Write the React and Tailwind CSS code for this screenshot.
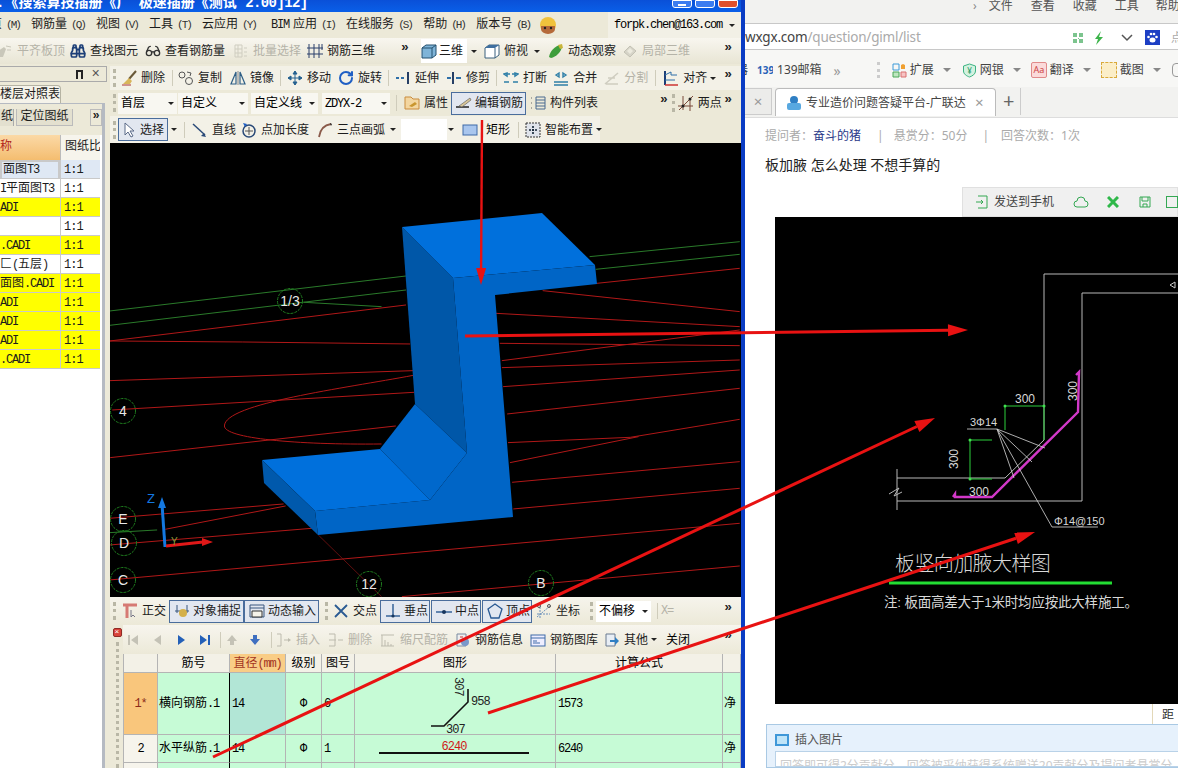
import { Binoculars, Glasses, RotateCw } from "lucide-react";

// latin runs in the CAD window are squeezed to simsun's half-width
const Mix = ({ t }) =>
  t.split(/([\x00-\xff]+)/).map((s, i) =>
    /^[\x00-\xff]+$/.test(s) ? (
      <span key={i} className="tracking-[-1.2px]">{s}</span>
    ) : (
      <span key={i}>{s}</span>
    )
  );

const Ic = ({ children, cn = "" }) => (
  <svg viewBox="0 0 16 16" fill="none" className={`w-4 h-4 shrink-0 ${cn}`}>{children}</svg>
);

const I = {
  level: <Ic><path d="M1 14V8l6-4 2 2-3 8z" fill="#c9c7ba" /><path d="M9 3l5 1M10 7h4" stroke="#c9c7ba" /></Ic>,
  binoc: <Binoculars className="w-4 h-4 shrink-0 text-[#1d3f78]" strokeWidth={2.6} />,
  glasses: <Glasses className="w-4 h-4 shrink-0 text-[#333]" strokeWidth={2} />,
  batch: <Ic><path d="M2 2h7v12H2zM2 6h7M2 10h7M5 2v12M11 5h3M11 9h3M11 13h3" stroke="#cfcdc0" /></Ic>,
  rebar3d: <Ic><path d="M2 1v14M7 1v14M12 1v14M0 5h16M0 11h16M15 1v6" stroke="#2b3f6b" /></Ic>,
  box: <Ic><path d="M1 5l4-3h10v10l-4 3H1z" fill="#7fb4d8" stroke="#24506f" /><path d="M1 5h10v10M11 5l4-3" stroke="#24506f" /></Ic>,
  top: <Ic><path d="M1 5l4-3h10v10l-4 3H1z" fill="#fff" stroke="#3a617f" /><path d="M1 5l4-3h10l-4 3z" fill="#3f6f9f" /><path d="M11 5v10" stroke="#3a617f" /></Ic>,
  orbit: <Ic><path d="M1 14C2 8 7 3 12 2l2 2c-1 5-6 10-11 11z" fill="#3f9e3c" /><path d="M10 2l4-1 1 4-3 1z" fill="#c9b53a" /></Ic>,
  local: <Ic><path d="M2 9l6-6 6 5-6 6z" fill="#d6d4c8" stroke="#c3c1b4" /><path d="M5 8l3-3 3 3-3 3z" fill="#eceade" /></Ic>,
  broom: <Ic><path d="M15 1L8 9" stroke="#6a5a3a" strokeWidth="2" /><path d="M8 8l-6 6h7l2-3z" fill="#d8b65a" /><path d="M1 15h9" stroke="#a33" /></Ic>,
  copy: <Ic><circle cx="4" cy="5" r="3" stroke="#555" /><circle cx="11" cy="11" r="3.5" stroke="#555" /><path d="M9 2l4 1-1 3" stroke="#555" /></Ic>,
  mirror: <Ic><path d="M6 2L1 14h5zM10 2l5 12h-5z" stroke="#2f5f86" strokeWidth="1.2" /><path d="M8 1v14" stroke="#888" /></Ic>,
  move: <Ic><path d="M8 1v14M1 8h14M8 1L6 4h4zM8 15l-2-3h4zM1 8l3-2v4zM15 8l-3-2v4z" stroke="#25618f" fill="#25618f" /></Ic>,
  rotate: <RotateCw className="w-4 h-4 shrink-0 text-[#1f5fc4]" strokeWidth={3} />,
  extend: <Ic><path d="M1 8h3M6 8h3" stroke="#2f6fa8" strokeWidth="2" /><path d="M13 2v12" stroke="#263f66" strokeWidth="2" /></Ic>,
  trim: <Ic><path d="M1 8h4M10 8h5" stroke="#2f6fa8" strokeWidth="2" /><path d="M7 2v12" stroke="#263f66" strokeWidth="2" /></Ic>,
  brk: <Ic><path d="M1 12h5M10 12h5M1 4l3-1v3zM15 4l-3-1v3zM4 4h3M9 4h3" stroke="#2f7fa8" strokeWidth="1.5" /></Ic>,
  merge: <Ic><path d="M1 12h14M3 5l3-2v4zM13 5l-3-2v4zM1 15h14" stroke="#2f7fa8" strokeWidth="1.4" /></Ic>,
  split: <Ic><path d="M1 14L14 3M2 14h12M4 8h7" stroke="#cfcdc0" strokeWidth="1.6" /></Ic>,
  align: <Ic><path d="M2 1v14" stroke="#1d3f78" strokeWidth="2" /><path d="M2 5l6-3v3h6M2 10h10" stroke="#2f6fa8" /><path d="M2 15h13" stroke="#c33" strokeWidth="1.5" /></Ic>,
  props: <Ic><path d="M1 2h6l2 2h6v10H1z" fill="#f3d6a0" stroke="#c98b3c" /><path d="M5 11l6-4 2 2-5 3z" fill="#c9962f" /></Ic>,
  edit: <Ic><path d="M0 12h13" stroke="#222" strokeWidth="1.5" /><path d="M3 11L14 3l1 2L6 12z" fill="#d9c79a" stroke="#555" strokeWidth=".6" /></Ic>,
  list: <Ic><path d="M1 3h2M1 8h2M1 13h2" stroke="#666" strokeDasharray="1 1" /><path d="M6 2h9v12H6zM6 5h9M6 8h9M6 11h9" stroke="#4a6a90" /></Ic>,
  two: <Ic><path d="M1 15L15 1M5 1v14M12 3v13M0 11h15" stroke="#7a4a3a" /><circle cx="5" cy="11" r="1.5" fill="#222" /><circle cx="12" cy="4" r="1.5" fill="#222" /></Ic>,
  cursor: <svg viewBox="0 0 12 16" className="w-3 h-4 shrink-0" fill="none"><path d="M2 1v12l3-3 3 5 2-1-3-5h4z" fill="#fff" stroke="#5a6a88" /></svg>,
  line: <Ic><path d="M1 2l12 11" stroke="#2a4a78" strokeWidth="1.5" /><path d="M14 15l-5-1 3-3z" fill="#2a4a78" /></Ic>,
  point: <Ic><circle cx="8" cy="9" r="6" stroke="#2a4a78" strokeWidth="1.5" /><path d="M8 5v8M4 9h8" stroke="#555" /><path d="M2 1l4 1-2 3z" fill="#1f5fc4" /></Ic>,
  arc: <Ic><path d="M2 15C3 8 7 3 14 2" stroke="#8a5a4a" strokeWidth="1.8" /><path d="M13 1l2 1-1 2z" fill="#222" /></Ic>,
  rect: <Ic><rect x="1" y="3" width="14" height="10" fill="#a9c6ee" stroke="#3e6aa8" /></Ic>,
  smart: <Ic><rect x="1" y="1" width="14" height="14" fill="#dfe3ea" stroke="#333" strokeDasharray="2 1" /><path d="M8 4v8M4 8h8" stroke="#123" strokeWidth="1.6" strokeDasharray="2 1" /></Ic>,
  ortho: <Ic><path d="M1 2h14M5 2v13" stroke="#d67a74" strokeWidth="3" /><path d="M9 7v7l2-2 2 2" stroke="#778" /></Ic>,
  snap: <Ic><path d="M1 8h14M3 2v8M13 2v8" stroke="#38577f" /><circle cx="9" cy="10" r="4" fill="#d4b04a" /></Ic>,
  input: <Ic><path d="M1 2h14v12H1zM1 5h14" stroke="#38577f" /><path d="M3 8h10v6H3z" fill="#f5f3ea" stroke="#333" /></Ic>,
  cross: <Ic><path d="M2 2l12 12M14 2L2 14" stroke="#2a5a92" strokeWidth="1.8" /></Ic>,
  perp: <Ic><path d="M1 13h14" stroke="#2a5a92" strokeWidth="1.4" /><path d="M8 1v12" stroke="#2a5a92" strokeWidth="1.4" /><circle cx="8" cy="13" r="1.6" fill="#17365f" /></Ic>,
  mid: <Ic><path d="M0 9h16" stroke="#2a5a92" strokeWidth="1.4" /><circle cx="8" cy="9" r="2" fill="#17365f" /></Ic>,
  vertex: <Ic><path d="M8 1l7 5-3 9H4L1 6z" stroke="#2a5a92" strokeWidth="1.3" /></Ic>,
  coord: <Ic><path d="M1 14L14 3M4 4v11M1 11h13" stroke="#6b90ba" strokeDasharray="2 1" /><circle cx="3" cy="3" r="1.5" stroke="#555" /><circle cx="13" cy="3" r="1.5" stroke="#555" /></Ic>,
  ins: <Ic><path d="M1 2h4v12H1M8 8h4" stroke="#bdbbae" /><path d="M15 8l-3-2v4z" fill="#bdbbae" /></Ic>,
  del: <Ic><path d="M1 2h6v12H1M1 8h7" stroke="#bdbbae" /><path d="M10 8h5" stroke="#bdbbae" /></Ic>,
  scale: <Ic><path d="M1 3h13M2 3v11M5 8v6M8 10v4M11 12v2M1 14h13" stroke="#bdbbae" /></Ic>,
  info: <Ic><path d="M2 2h9v12H2z" fill="#eee" stroke="#7a8aa0" /><circle cx="10" cy="10" r="4" fill="#7a98c9" /><path d="M5 5h3" stroke="#c33" /></Ic>,
  lib: <Ic><rect x="1" y="3" width="14" height="11" fill="#eef" stroke="#3e6aa8" /><path d="M1 6h14M3 9h4M3 11h7" stroke="#3e6aa8" /></Ic>,
  other: <Ic><path d="M2 2h9v12H2z" fill="#e8eef5" stroke="#6a7a90" /><path d="M6 8h5V5l4 4-4 4v-3H6z" fill="#2f7fc4" /></Ic>,
};

const Caret = ({ cn = "" }) => (
  <span className={`w-0 h-0 shrink-0 border-x-[3px] border-t-[3px] border-x-transparent border-t-[#222] ${cn}`} />
);
const Sep = ({ cn = "" }) => <span className={`w-px h-4 shrink-0 bg-[#cfccbb] ${cn}`} />;
const Grip = ({ cn = "" }) => <span className={`w-[3px] h-[18px] shrink-0 border-l-[3px] border-dotted border-[#b9b7a6] ${cn}`} />;
const More = ({ cn = "ml-auto mr-[9px]" }) => <span className={`text-[13px] font-bold leading-none -mt-2 text-[#222] ${cn}`}>»</span>;

const Tool = ({ icon, label, gray, cn = "" }) => (
  <span className={`flex items-center gap-1 shrink-0 whitespace-nowrap ${gray ? "text-[#b5b3a8]" : "text-[#1c1c1c]"} ${cn}`}>
    {icon}
    <span className="pt-[2px]"><Mix t={label} /></span>
  </span>
);
const Pressed = ({ icon, label, cn = "" }) => (
  <span className={`h-[23px] flex items-center gap-[3px] pl-1 shrink-0 whitespace-nowrap border border-[#4a6d9c] bg-[#e2e7f0] text-[#1c1c1c] ${cn}`}>
    {icon}
    <span className="pt-[2px]">{label}</span>
  </span>
);
const Sel = ({ label, cn = "" }) => (
  <span className={`h-[21px] flex items-center justify-between pl-[3px] pr-[3px] shrink-0 bg-[#f8f7f1] ${cn}`}>
    <span className="pt-[2px]"><Mix t={label} /></span>
    <Caret />
  </span>
);

const menus = [
  ["页", "M"], ["钢筋量", "Q"], ["视图", "V"], ["工具", "T"], ["云应用", "Y"],
  ["BIM应用", "I"], ["在线服务", "S"], ["帮助", "H"], ["版本号", "B"],
];

const drawings = [
  ["面图T3", "bg-[#dfe8f4]"], ["I平面图T3", "bg-white"], ["ADI", "bg-[#ffff00]"], ["", "bg-white"],
  [".CADI", "bg-[#ffff00]"], ["匚(五层)", "bg-white"], ["面图.CADI", "bg-[#ffff00]"], ["ADI", "bg-[#ffff00]"],
  ["ADI", "bg-[#ffff00]"], ["ADI", "bg-[#ffff00]"], [".CADI", "bg-[#ffff00]"],
];

const Sidebar = () => (
  <div className="w-[110px] shrink-0 flex flex-col bg-[#ece9d8] text-[#1c1c1c]">
    <div className="h-[16px] w-[107px] flex items-center justify-end gap-[9px] pr-[6px] border border-l-0 border-[#aaa] text-[11px] leading-none">
      <span className="w-[7px] h-[9px] border-x-2 border-t-2 border-[#222]" />
      <span className="text-[14px] text-[#555]">×</span>
    </div>
    <div className="h-[18px] mt-[3px] w-[61px] bg-[#f5f3ea] border-r border-t border-[#b5b3a3] rounded-tr-sm overflow-hidden whitespace-nowrap leading-[18px] text-right pr-[2px]">楼层对照表</div>
    <div className="flex-1 w-[105px] bg-white border-r-[3px] border-t border-[#b5bac2] flex flex-col">
      <div className="h-[31px] shrink-0 bg-[#ece9d8] flex items-start pt-[5px]">
        <span className="w-[14px] h-[17px] bg-[#e3e0cf] border-r border-[#aaa] text-right leading-[17px] overflow-hidden">纸</span>
        <span className="ml-[2px] w-[57px] h-[17px] bg-[#e3e0cf] border border-t-0 border-[#bbb] text-center leading-[17px]">定位图纸</span>
        <span className="ml-[17px] w-[12px] h-[17px] border border-[#bbb] text-center font-bold leading-[13px]">»</span>
      </div>
      <div className="h-[25px] shrink-0 flex">
        <span className="w-[60px] bg-gradient-to-b from-[#fbd9a6] to-[#f4bd6f] text-[#b2261b] leading-[25px] overflow-hidden">称</span>
        <span className="w-[40px] bg-[#f6f4ec] pl-1 leading-[25px] border-l border-[#bbb] whitespace-nowrap overflow-hidden">图纸比</span>
      </div>
      <div className="grid grid-cols-[60px_40px] auto-rows-[19px]">
        {drawings.map(([name, bg], i) => (
          <div key={i} className="contents">
            <span className={`${bg} whitespace-nowrap overflow-hidden border-b border-[#c9c9c9] ${i === 0 ? "border-2 border-[#777] pl-px leading-[16px]" : "leading-[20px]"}`}>
              <Mix t={name} />
            </span>
            <span className={`${bg} border-l border-b border-[#c9c9c9] pl-[3px] leading-[20px] tracking-[-1px]`}>1:1</span>
          </div>
        ))}
      </div>
    </div>
  </div>
);

// coordinates read off a 2.45 x 3 enlargement of the viewport, hence the scale below
const redLines = [
  "M24 603L750 495", "M24 603L350 606L760 612", "M24 722L768 692", "M30 810L770 757", "M25 953L725 858",
  "M768 706C600 745 305 790 305 858C305 895 480 915 690 912",
  "M24 1135L450 1092", "M160 1168L455 1098", "M24 1215L520 1165", "M24 1320L1568 1150", "M740 1370L1568 1278",
  "M1218 430L1568 385", "M1085 452L1568 515", "M970 520L1568 560", "M980 610L1568 617", "M985 662L1568 570",
  "M985 683L1568 660", "M988 740L1568 690", "M998 822L1568 745", "M1000 908L1300 892L1568 838", "M1005 968L1320 890",
  "M1010 1027L1568 965", "M1013 1107L1568 1045",
];
const greenLines = ["M24 513L750 408", "M24 556L750 450", "M500 487L690 500", "M1200 350L1568 305", "M1215 388L1568 343", "M24 1178L140 1170"];
const axes = [["1/3", 290, 301], ["4", 123, 411], ["E", 123, 519], ["D", 124, 543], ["C", 123, 580], ["12", 369, 584], ["B", 541, 583]];

const Viewport = () => (
  <div className="h-[454px] bg-black">
    <svg viewBox="110 143 631 454" className="w-full h-full block">
      <g transform="translate(100 140) scale(.408 .3333)" fill="none">
        {redLines.map((d) => <path key={d} d={d} stroke="#b01818" strokeWidth="1" vectorEffect="non-scaling-stroke" />)}
        <path d="M535 1185L690 1370" stroke="#8a1515" strokeWidth=".7" vectorEffect="non-scaling-stroke" />
        {greenLines.map((d) => <path key={d} d={d} stroke="#2a7a2a" strokeWidth="1" vectorEffect="non-scaling-stroke" />)}
      </g>
      {axes.map(([t, x, y]) => (
        <g key={t}>
          <circle cx={x} cy={y} r="12.5" fill="none" stroke="#1e7a1e" strokeDasharray="3 1" />
          <text x={x} y={y + 5} textAnchor="middle" fill="#e8e8e8" className="text-[14px] font-[family-name:'Liberation_Sans',sans-serif]">{t}</text>
        </g>
      ))}
      <polygon points="402,227 453,278 467,453 415,404" fill="#0057a8" />
      <polygon points="402,227 542,213 595,265 453,278" fill="#0070dc" />
      <polygon points="453,278 595,265 597,284 495,295 513,517 318,535 315,511 430,500 467,453" fill="#0065c6" />
      <polygon points="415,404 467,453 430,500 380,449" fill="#0068cc" />
      <polygon points="262,460 380,449 430,500 315,511" fill="#0070dc" />
      <polygon points="262,460 315,511 318,535 264,483" fill="#0059ac" />
      <path d="M165 547L162 504" stroke="#1478e0" strokeWidth="3" />
      <polygon points="162,497 158,508 166,508" fill="#1478e0" />
      <text x="147" y="503" fill="#1478e0" className="text-[13px] font-[family-name:'Liberation_Sans',sans-serif]">Z</text>
      <path d="M166 546L203 542" stroke="#e01818" strokeWidth="3" />
      <polygon points="213,542 202,538 202,546" fill="#e01818" />
      <text x="171" y="545" fill="#8a9a3a" className="text-[10px] font-[family-name:'Liberation_Sans',sans-serif]">Y</text>
    </svg>
  </div>
);

const cell = "border-r border-b border-[#b4b4b4] flex items-center overflow-hidden whitespace-nowrap";
const head = `${cell} justify-center bg-[#f3f1e7] pt-[2px]`;
const Row = ({ no, name, grade, fig, shape, formula, first }) => (
  <>
    <span className={`${cell} justify-center ${first ? "bg-[#f9c67c] text-[#8a2a1a]" : "bg-[#f6f4ec]"}`}><Mix t={no} /></span>
    <span className={`${cell} pl-px bg-[#c6fbd6]`}><Mix t={name} /></span>
    <span className={`${cell} pl-[2px] border-l border-l-black -ml-px ${first ? "bg-[#b2e6d6]" : "bg-[#c6fbd6]"}`}><Mix t="14" /></span>
    <span className={`${cell} justify-center bg-[#c6fbd6]`}>{grade}</span>
    <span className={`${cell} pl-[2px] bg-[#c6fbd6]`}><Mix t={fig} /></span>
    <span className={`${cell} bg-[#c6fbd6]`}>{shape}</span>
    <span className={`${cell} pl-[2px] bg-[#c6fbd6]`}><Mix t={formula} /></span>
    <span className={`${cell} pl-[1px] bg-[#c6fbd6]`}>净</span>
  </>
);

const RebarPanel = () => (
  <div className="flex-1 flex min-h-0 bg-[#ece9d8]">
    <div className="w-[13px] shrink-0 flex flex-col items-center pl-[1px] pt-[3px] gap-[5px]">
      <span className="w-[9px] h-[9px] rounded-[2px] bg-[#d8433a] border border-[#8f2a25] text-white text-[8px] leading-[6px] text-center">×</span>
      <span className="flex-1 w-[3px] border-l-[3px] border-dotted border-[#b9b7a6]" />
    </div>
    <div className="flex-1 min-w-0 flex flex-col">
      <div className="h-[29px] shrink-0 flex items-center bg-gradient-to-b from-[#f7f5ee] to-[#ece9d8]">
        <svg viewBox="0 0 12 12" className="w-3 h-3 ml-1 shrink-0"><path d="M1 1h2v10H1zM11 1v10L4 6z" fill="#c4c2b6" /></svg>
        <svg viewBox="0 0 12 12" className="w-3 h-3 ml-3 shrink-0"><path d="M10 1v10L3 6z" fill="#c4c2b6" /></svg>
        <svg viewBox="0 0 12 12" className="w-3 h-3 ml-3 shrink-0"><path d="M3 1v10l7-5z" fill="#2460b8" /></svg>
        <svg viewBox="0 0 12 12" className="w-3 h-3 ml-3 shrink-0"><path d="M1 1v10l7-5zM9 1h2v10H9z" fill="#2460b8" /></svg>
        <Sep cn="ml-[9px]" />
        <svg viewBox="0 0 12 12" className="w-3 h-3 ml-[5px] shrink-0"><path d="M6 1l5 6H8v4H4V7H1z" fill="#c4c2b6" /></svg>
        <svg viewBox="0 0 12 12" className="w-3 h-3 ml-[11px] shrink-0"><path d="M6 11l5-6H8V1H4v4H1z" fill="#3f6fc0" /></svg>
        <Sep cn="ml-[10px]" />
        <Tool icon={I.ins} label="插入" gray cn="ml-1" />
        <Tool icon={I.del} label="删除" gray cn="ml-2" />
        <Tool icon={I.scale} label="缩尺配筋" gray cn="ml-2" />
        <Tool icon={I.info} label="钢筋信息" cn="ml-[7px]" />
        <Tool icon={I.lib} label="钢筋图库" cn="ml-[7px]" />
        <Tool icon={I.other} label="其他" cn="ml-[6px]" />
        <Caret cn="ml-[3px]" />
        <span className="ml-[9px] pt-[2px]">关闭</span>
        <More />
      </div>
      <div className="grid grid-cols-[34px_72px_56px_36px_33px_201px_167px_18px] grid-rows-[19px_62px_28px_28px] overflow-hidden border-l border-[#b4b4b4]">
        <span className={head} />
        <span className={head}>筋号</span>
        <span className={`${cell} justify-center bg-[#f9cd86] text-[#a3341f] pt-[2px]`}>直径<span className="tracking-[-1.2px]">(mm)</span></span>
        <span className={head}>级别</span>
        <span className={head}>图号</span>
        <span className={head}>图形</span>
        <span className={head}>计算公式</span>
        <span className={head} />
        <Row first no="1*" name="横向钢筋.1" grade="Φ" fig="6" formula="1573" shape={
          <svg viewBox="0 0 201 62" className="w-[201px] h-[62px] shrink-0">
            <path d="M76 53H89L113 29V16" fill="none" stroke="#111" strokeWidth="1.6" />
            <text x="116" y="32" className="text-[12px] tracking-[-1px]" fill="#222">958</text>
            <text x="91" y="60" className="text-[12px] tracking-[-1px]" fill="#222">307</text>
            <text transform="translate(100 4) rotate(90)" className="text-[12px] tracking-[-1px]" fill="#222">307</text>
          </svg>
        } />
        <Row no="2" name="水平纵筋.1" grade="Φ" fig="1" formula="6240" shape={
          <svg viewBox="0 0 201 28" className="w-[201px] h-[28px] shrink-0">
            <path d="M24 18H174" stroke="#111" strokeWidth="2" />
            <text x="99" y="15" textAnchor="middle" className="text-[12px] tracking-[-1px]" fill="#d01818">6240</text>
          </svg>
        } />
        <Row no="3" name="" grade="" fig="" formula="" shape={null} />
      </div>
    </div>
  </div>
);

const CadWindow = () => (
  <div className="w-[745px] shrink-0 h-full flex flex-col border-r-4 border-[#0a3cc4] bg-[#ece9d8] text-[12px] font-[family-name:'Liberation_Mono','Noto_Sans_CJK_SC',monospace]">
    <div className="h-3 shrink-0 flex bg-gradient-to-b from-[#0a50d8] to-[#0a5fe8] overflow-hidden">
      <span className="-mt-[5px] -ml-1 font-bold text-[14px] leading-[16px] text-white whitespace-nowrap">.《搜索算技插册《广 极速插册《测试 <span className="tracking-[-.6px]">2.00]12]</span></span>
      <span className="ml-auto mr-[3px] flex gap-[3px] items-start">
        <span className="w-[20px] h-[8px] bg-[#3c7cf0] border border-white rounded-b-[3px] flex justify-center items-end"><span className="w-2 h-[2px] mb-[1px] bg-white" /></span>
        <span className="w-[20px] h-[8px] bg-[#3c7cf0] border border-white rounded-b-[3px]" />
        <span className="w-[20px] h-[8px] bg-[#e0502c] border border-white rounded-b-[3px]" />
      </span>
    </div>

    <div className="h-[26px] shrink-0 flex items-center gap-3 -ml-[10px] overflow-hidden">
      {menus.map(([zh, key]) => (
        <span key={key} className="flex gap-1 whitespace-nowrap text-[#1c1c1c]">
          <Mix t={zh} />
          <span className="w-[13px] text-[11px] leading-[18px] tracking-[-2px] text-[#333]">({key})</span>
        </span>
      ))}
      <svg viewBox="0 0 18 18" className="w-[18px] h-[18px] -ml-[2px] shrink-0">
        <circle cx="9" cy="9" r="8" fill="#f0c23c" />
        <path d="M2 10h14v3a7 5 0 0 1-14 0z" fill="#b56a3a" />
        <circle cx="6" cy="12" r="1.2" fill="#222" /><circle cx="12" cy="12" r="1.2" fill="#222" />
      </svg>
      <span className="ml-auto w-[133px] h-[26px] shrink-0 bg-[#f2f0e6] flex items-center justify-between pl-[6px] pr-[6px] tracking-[-1.2px]">
        forpk.chen@163.com<Caret />
      </span>
    </div>

    <div className="h-[26px] shrink-0 flex items-center bg-gradient-to-b from-[#f8f6ef] to-[#e8e5d4] -ml-[3px]">
      <Tool icon={I.level} label="平齐板顶" gray />
      <Tool icon={I.binoc} label="查找图元" cn="ml-[5px]" />
      <Tool icon={I.glasses} label="查看钢筋量" cn="ml-[7px]" />
      <Tool icon={I.batch} label="批量选择" gray cn="ml-2" />
      <Tool icon={I.rebar3d} label="钢筋三维" cn="ml-[6px]" />
      <More cn="ml-[26px]" />
      <span className="ml-3 h-[24px] flex items-center bg-white shrink-0 pr-1"><Tool icon={I.box} label="三维" cn="gap-[2px]" /></span>
      <Caret cn="ml-[4px]" />
      <Tool icon={I.top} label="俯视" cn="ml-[7px]" />
      <Caret cn="ml-[6px]" />
      <Tool icon={I.orbit} label="动态观察" cn="ml-2" />
      <Tool icon={I.local} label="局部三维" gray cn="ml-[6px]" />
      <More />
    </div>

    <div className="flex-1 min-h-0 flex pt-[2px]">
      <Sidebar />
      <div className="flex-1 min-w-0 flex flex-col">
        <div className="h-[24px] shrink-0 flex items-center bg-[#f3f1e7]">
          <Grip cn="ml-[3px]" />
          <Tool icon={I.broom} label="删除" cn="ml-[5px]" />
          <Sep cn="ml-[7px]" />
          <Tool icon={I.copy} label="复制" cn="ml-[5px]" />
          <Tool icon={I.mirror} label="镜像" cn="ml-2" />
          <Sep cn="ml-[6px]" />
          <Tool icon={I.move} label="移动" cn="ml-[6px]" />
          <Tool icon={I.rotate} label="旋转" cn="ml-[7px]" />
          <Sep cn="ml-[6px]" />
          <Tool icon={I.extend} label="延伸" cn="ml-[6px]" />
          <Tool icon={I.trim} label="修剪" cn="ml-[7px]" />
          <Sep cn="ml-[6px]" />
          <Tool icon={I.brk} label="打断" cn="ml-[6px]" />
          <Tool icon={I.merge} label="合并" cn="ml-[6px]" />
          <Tool icon={I.split} label="分割" gray cn="ml-[7px]" />
          <Sep cn="ml-[7px]" />
          <Tool icon={I.align} label="对齐" cn="ml-[7px]" />
          <Caret cn="ml-[3px]" />
          <More />
        </div>

        <div className="h-[26px] shrink-0 flex items-center bg-[#ece9d8]">
          <Grip cn="ml-[3px]" />
          <Sel label="首层" cn="ml-[2px] w-[59px]" />
          <Sel label="自定义" cn="ml-px w-[70px]" />
          <Sel label="自定义线" cn="ml-[3px] w-[67px]" />
          <Sel label="ZDYX-2" cn="ml-1 w-[68px]" />
          <Sep cn="ml-[6px]" />
          <Tool icon={I.props} label="属性" cn="ml-[7px]" />
          <Pressed icon={I.edit} label="编辑钢筋" cn="ml-[3px] w-[75px]" />
          <Tool icon={I.list} label="构件列表" cn="ml-1" />
          <More cn="ml-[62px]" />
          <Grip cn="ml-[4px]" />
          <Tool icon={I.two} label="两点" cn="ml-[3px]" />
          <More />
        </div>

        <div className="h-[27px] shrink-0 flex items-center bg-[#f3f1e7] mr-[141px]">
          <Grip cn="ml-[3px]" />
          <Pressed icon={I.cursor} label="选择" cn="ml-[2px] w-[50px] gap-[5px]" />
          <Caret cn="ml-[3px]" />
          <Sep cn="ml-[7px]" />
          <Tool icon={I.line} label="直线" cn="ml-[7px]" />
          <Tool icon={I.point} label="点加长度" cn="ml-[5px]" />
          <Tool icon={I.arc} label="三点画弧" cn="ml-2" />
          <Caret cn="ml-[5px]" />
          <span className="ml-[5px] w-[46px] h-[21px] bg-white shrink-0" />
          <Caret cn="ml-[1px]" />
          <span className="ml-2 flex items-center gap-2 shrink-0">{I.rect}<span className="pt-[2px]">矩形</span></span>
          <Sep cn="ml-2" />
          <Tool icon={I.smart} label="智能布置" cn="ml-[6px]" />
          <Caret cn="ml-[3px]" />
        </div>

        <Viewport />

        <div className="h-[28px] shrink-0 flex items-center bg-gradient-to-b from-[#f6f4ec] to-[#ece9d8]">
          <Grip cn="ml-[3px]" />
          <Tool icon={I.ortho} label="正交" cn="ml-[6px]" />
          <Pressed icon={I.snap} label="对象捕捉" cn="ml-[3px] w-[75px]" />
          <Pressed icon={I.input} label="动态输入" cn="w-[75px]" />
          <Grip cn="ml-[6px]" />
          <Tool icon={I.cross} label="交点" cn="ml-[5px]" />
          <Pressed icon={I.perp} label="垂点" cn="ml-[3px] w-[50px]" />
          <Pressed icon={I.mid} label="中点" cn="ml-px w-[50px]" />
          <Pressed icon={I.vertex} label="顶点" cn="ml-px w-[50px]" />
          <Tool icon={I.coord} label="坐标" cn="ml-1" />
          <Grip cn="ml-[10px]" />
          <Sel label="不偏移" cn="ml-[3px] w-[55px] bg-white" />
          <Sep cn="ml-[6px]" />
          <span className="ml-[3px] text-[#b5b3a8] tracking-[-1.2px]">X=</span>
          <More />
        </div>

        <RebarPanel />
      </div>
    </div>
  </div>
);

const Dropdown = ({ cn = "ml-[9px]" }) => <span className={`w-0 h-0 shrink-0 border-x-[4px] border-t-[4px] border-x-transparent border-t-[#888] ${cn}`} />;

const ExtTool = ({ icon, label, cn = "" }) => (
  <span className={`flex items-center gap-[3px] shrink-0 ${cn}`}>
    {icon}
    <span>{label}</span>
  </span>
);

// the scanned detail drawing, in page coordinates
const DetailDrawing = () => (
  <svg viewBox="775 217 403 487" className="w-full h-full block font-[family-name:'Liberation_Sans','Noto_Sans_CJK_SC',sans-serif]">
    <g fill="none" stroke="#b8b8b8" strokeWidth="1">
      <path d="M1178 274H1044V440L1005 478H897" />
      <path d="M1178 293H1082V501H897" />
      <path d="M897 469V510M889 494L899 488L894 496L902 492" />
    </g>
    <path d="M1170 285l5-3v6z" fill="none" stroke="#ccc" />
    <g fill="none" stroke="#2ccf3c" strokeWidth="1">
      <path d="M1005 406H1044V440M1005 406V430" />
      <path d="M992 440H970V479H992" />
    </g>
    <g fill="#40e050">
      <circle cx="1005" cy="406" r="1.5" /><circle cx="1044" cy="406" r="1.5" /><circle cx="970" cy="440" r="1.5" /><circle cx="970" cy="479" r="1.5" />
    </g>
    <path d="M953 497L955 494V497H992L1078 412L1079 372L1076 375" fill="none" stroke="#d238c8" strokeWidth="2.4" />
    <g fill="none" stroke="#d8d8d8" strokeWidth=".8">
      <path d="M967 429H997L1045 448M997 429L1032 462M997 429L1014 478M997 429L1052 527H1098" />
    </g>
    <g fill="#d8d8d8">
      <text x="1015" y="403" className="text-[12px]">300</text>
      <text x="969" y="496" className="text-[12px]">300</text>
      <text transform="translate(958 469) rotate(-90)" className="text-[12px]">300</text>
      <text transform="translate(1077 401) rotate(-90)" className="text-[12px]">300</text>
      <text x="970" y="426" className="text-[11px]">3Φ14</text>
      <text x="1054" y="525" className="text-[11px]">Φ14@150</text>
      <text x="895" y="571" className="text-[20px] font-light" letterSpacing="-.6">板竖向加腋大样图</text>
      <text x="884" y="607" className="text-[13.5px]" letterSpacing="-.2">注: 板面高差大于1米时均应按此大样施工。</text>
    </g>
    <path d="M889 583H1112" stroke="#22dd33" strokeWidth="3" />
  </svg>
);

const Browser = () => (
  <div className="flex-1 min-w-0 h-full flex flex-col overflow-hidden bg-white text-[12px] text-[#333] font-[family-name:'Noto_Sans','Noto_Sans_CJK_SC',sans-serif]">
    <div className="h-[24px] shrink-0 flex items-center pb-3 bg-[#f2f2f0] border-b border-[#c8c8c8] text-[#555] whitespace-nowrap">
      <span className="ml-[228px] text-[#888]">›</span>
      <span className="ml-3">文件</span>
      <span className="ml-[18px]">查看</span>
      <span className="ml-[18px]">收藏</span>
      <span className="ml-[18px]">工具</span>
      <span className="ml-[17px]">帮助</span>
    </div>
    <div className="h-[26px] shrink-0 flex items-center pt-[2px] bg-white border-b border-[#c8c8c8]">
      <span className="w-[177px] shrink-0 text-[13.5px] tracking-[-.2px] whitespace-nowrap"><span className="text-[#444]">wxgx.com</span><span className="text-[#aaa]">/question/giml/list</span></span>
      <svg viewBox="0 0 12 12" className="ml-[150px] w-3 h-3 shrink-0"><path d="M1 1h4v4H1zM7 1h4v4H7zM1 7h4v4H1zM7 7h4v4H7zM6 6h1v1H6z" fill="#7cc48e" /></svg>
      <svg viewBox="0 0 10 14" className="ml-[10px] w-[10px] h-[14px] shrink-0"><path d="M7 0L1 8h3l-2 6 7-8H5z" fill="#3cb44a" /></svg>
      <span className="ml-[9px] w-px h-[25px] bg-[#ddd]" />
      <svg viewBox="0 0 12 8" className="ml-2 w-3 h-2 shrink-0"><path d="M1 1l5 5 5-5" fill="none" stroke="#555" strokeWidth="1.5" /></svg>
      <span className="ml-[6px] w-px h-[25px] bg-[#ddd]" />
      <svg viewBox="0 0 15 15" className="ml-[6px] w-[15px] h-[15px] shrink-0">
        <rect width="15" height="15" fill="#1d3fc4" />
        <ellipse cx="7.500" cy="10" rx="3" ry="2.500" fill="#fff" />
        <circle cx="3.500" cy="7" r="1.300" fill="#fff" /><circle cx="6" cy="4" r="1.300" fill="#fff" /><circle cx="9" cy="4" r="1.300" fill="#fff" /><circle cx="11.500" cy="7" r="1.300" fill="#fff" />
      </svg>
      <span className="ml-[11px] text-[#aaa]">点</span>
    </div>
    <div className="h-[37px] shrink-0 flex items-center pt-[3px] bg-[#f7f7f5] whitespace-nowrap -ml-[9px] text-[#444]">
      <span>器</span>
      <svg viewBox="0 0 16 12" className="ml-[9px] w-4 h-3 shrink-0"><text x="0" y="10" fill="#2a63b8" className="text-[10px] font-bold">139</text></svg>
      <span className="ml-1">139邮箱</span>
      <span className="ml-[12px] text-[14px] text-[#999]">»</span>
      <span className="ml-[36px] w-[3px] h-[16px] border-l-[3px] border-dotted border-[#ccc]" />
      <ExtTool cn="ml-[12px]" label="扩展" icon={<svg viewBox="0 0 15 15" className="w-[15px] h-[15px] shrink-0"><path d="M1 1h6v6H1z" fill="none" stroke="#3a9ad9" /><path d="M9 2l2-1 2 1v4H9z" fill="#f0a030" /><path d="M1 9h6v5H1z" fill="#bfe6c0" stroke="#4aa858" /><path d="M9 9h5v5H9z" fill="#f7c4c4" stroke="#d97070" /></svg>} />
      <Dropdown />
      <ExtTool cn="ml-[11px]" label="网银" icon={<svg viewBox="0 0 15 15" className="w-[15px] h-[15px] shrink-0"><path d="M7.500 1l6 2v5c0 3-3 5-6 6-3-1-6-3-6-6V3z" fill="#d4f2e0" stroke="#3cb483" /><text x="7.500" y="11" textAnchor="middle" fill="#2a9a68" className="text-[8px]">¥</text></svg>} />
      <Dropdown />
      <ExtTool cn="ml-[10px]" label="翻译" icon={<span className="w-4 h-4 bg-[#fbdada] border border-[#e08a8a] rounded-[2px] text-[9px] leading-[14px] text-center text-[#c44]">Aa</span>} />
      <Dropdown />
      <ExtTool cn="ml-[10px]" label="截图" icon={<span className="w-4 h-4 bg-[#fbeec8] border border-dashed border-[#d9a93a]" />} />
      <Dropdown />
      <span className="ml-[11px] w-[14px] h-[14px] border border-[#999] rounded-sm shrink-0" />
    </div>
    <div className="h-[31px] shrink-0 flex items-start pt-[1px] bg-[#f2f2f0] border-b border-[#ddd] text-[#444]">
      <span className="w-[27px] h-[27px] border-r border-b border-t border-[#ccc] bg-[#ececea] text-center text-[15px] leading-[25px] text-[#999] shrink-0">×</span>
      <span className="ml-[3px] w-[221px] h-[28px] shrink-0 bg-white border border-b-0 border-[#bbb] rounded-t-[4px] flex items-center pl-[10px] whitespace-nowrap overflow-hidden">
        <svg viewBox="0 0 16 16" className="w-4 h-4 shrink-0"><circle cx="8" cy="5" r="4" fill="#2f7fc4" /><rect x="1" y="8" width="14" height="7" rx="2" fill="#58a8e0" /></svg>
        <span className="ml-1 w-[164px] shrink-0 overflow-hidden">专业造价问题答疑平台-广联达</span>
        <span className="ml-[5px] text-[15px] leading-none text-[#999]">×</span>
      </span>
      <span className="ml-[7px] text-[20px] leading-[26px] text-[#666]">+</span>
      <span className="ml-[6px] w-px h-[27px] bg-[#ccc]" />
    </div>
    <div className="flex-1 min-h-0 flex flex-col">
      <div className="h-[27px] shrink-0 flex items-end pl-5 whitespace-nowrap text-[#aaa]">
        提问者：<span className="text-[#2a3a8a]">奋斗的猪</span>
        <span className="ml-4 mr-[10px]">|</span>悬赏分：50分
        <span className="ml-[15px] mr-3">|</span>回答次数：1次
      </div>
      <p className="mt-[10px] h-[20px] shrink-0 pl-5 text-[14px] leading-[20px] text-[#222] whitespace-nowrap">板加腋 怎么处理 不想手算的</p>
      <div className="mt-3 ml-[217px] h-[30px] shrink-0 flex items-center bg-[#f0f0f0] border border-[#e0e0e0] text-[#444] whitespace-nowrap">
        <svg viewBox="0 0 14 14" className="ml-3 w-[14px] h-[14px] shrink-0"><path d="M3 1h9v12H3M1 7h7M6 5l2 2-2 2" fill="none" stroke="#34a853" /></svg>
        <span className="ml-[5px]">发送到手机</span>
        <span className="ml-[10px] w-px h-full bg-[#ddd]" />
        <svg viewBox="0 0 16 12" className="ml-[9px] w-4 h-3 shrink-0"><path d="M4 11a3 3 0 0 1 0-6 4 4 0 0 1 8 0 3 3 0 0 1 0 6z" fill="none" stroke="#34a853" /></svg>
        <span className="ml-[9px] w-px h-full bg-[#ddd]" />
        <svg viewBox="0 0 12 12" className="ml-[9px] w-3 h-3 shrink-0"><path d="M1 1l10 10M11 1L1 11" stroke="#2fb84a" strokeWidth="3" /></svg>
        <span className="ml-[10px] w-px h-full bg-[#ddd]" />
        <svg viewBox="0 0 12 12" className="ml-[10px] w-3 h-3 shrink-0"><path d="M1 1h10v10H1zM3 1v4h6V1M4 11V8h4v3" fill="none" stroke="#34a853" /></svg>
        <span className="ml-[10px] w-px h-full bg-[#ddd]" />
        <span className="ml-[5px] w-3 h-3 border border-[#34a853] shrink-0" />
      </div>
      <div className="ml-[30px] h-[487px] shrink-0 bg-black"><DetailDrawing /></div>
      <div className="h-[20px] shrink-0 flex justify-end items-center overflow-hidden">
        <span className="w-[26px] h-full pl-[9px] border-l border-[#e3d8b8] whitespace-nowrap leading-[22px] text-[#333]">距</span>
      </div>
      <div className="ml-[21px] flex-1 min-h-0 bg-[#e6f1fc] border border-r-0 border-[#a9c9e4] flex flex-col">
        <div className="h-[26px] shrink-0 flex items-center pt-1 pl-2 text-[#555]">
          <svg viewBox="0 0 14 12" className="w-[14px] h-3 shrink-0"><rect width="14" height="12" fill="#3f97d8" /><rect x="2" y="2" width="10" height="8" fill="#bfe4f8" /></svg>
          <span className="ml-[6px] text-[12px]">插入图片</span>
        </div>
        <div className="ml-2 flex-1 bg-white border border-r-0 border-[#b9d2e8] pl-1 whitespace-nowrap overflow-hidden text-[#ccc] leading-[28px]">回答即可得2分贡献分，回答被采纳获得系统赠送20贡献分及提问者悬赏分</div>
      </div>
    </div>
  </div>
);

const Arrow = ({ x1, y1, x2, y2, w = 3, len = 20, half = 6 }) => {
  const a = Math.atan2(y2 - y1, x2 - x1);
  const bx = x2 - Math.cos(a) * len;
  const by = y2 - Math.sin(a) * len;
  const nx = -Math.sin(a) * half;
  const ny = Math.cos(a) * half;
  return (
    <>
      <line x1={x1} y1={y1} x2={bx} y2={by} stroke="#e81212" strokeWidth={w} />
      <polygon points={`${x2},${y2} ${bx + nx},${by + ny} ${bx - nx},${by - ny}`} fill="#e81212" />
    </>
  );
};

export default function App() {
  return (
    <div className="relative w-[1178px] h-[768px] overflow-hidden flex bg-white">
      <CadWindow />
      <Browser />
      {/* hand-drawn annotation arrows lying across both windows */}
      <svg viewBox="0 0 1178 768" className="absolute inset-0 w-full h-full pointer-events-none">
        <Arrow x1={482} y1={120} x2={481} y2={285} w={2.4} len={17} half={5} />
        <Arrow x1={465} y1={336} x2={968} y2={330} />
        <Arrow x1={213} y1={757} x2={935} y2={418} />
        <Arrow x1={488} y1={713} x2={1035} y2={532} />
      </svg>
    </div>
  );
}
